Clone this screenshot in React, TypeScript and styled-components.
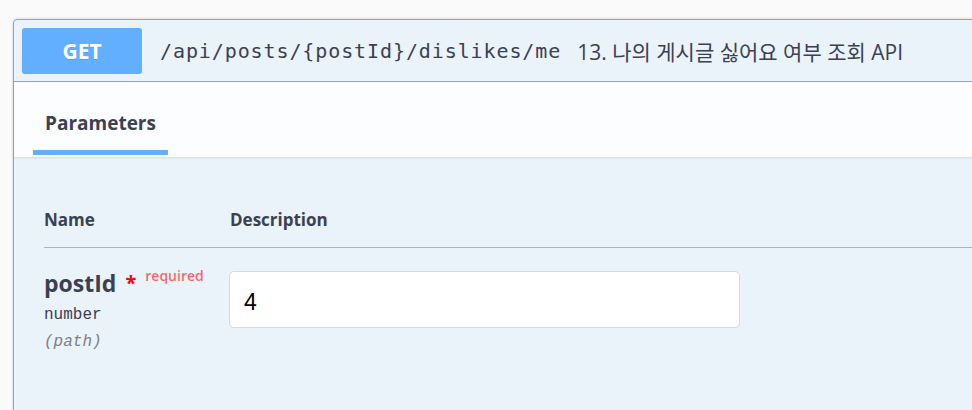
import styled, { createGlobalStyle } from 'styled-components'

const GlobalStyle = createGlobalStyle`
  html, body {
    margin: 0;
    padding: 0;
    background: #fafafa;
    overflow: hidden;
  }
`

const sans = `"Open Sans", "Noto Sans CJK KR", sans-serif`
const mono = `"Liberation Mono", "DejaVu Sans Mono", monospace`

const param = {
  name: "postId",
  type: "number",
  location: "path",
  value: "4",
}

const App = () => {
  return (
    <Page>
      <GlobalStyle />
      <Opblock>
        <Summary>
          <Method>GET</Method>
          <Path>/api/posts/&#123;postId&#125;/dislikes/me</Path>
          <Desc>13. 나의 게시글 싫어요 여부 조회 API</Desc>
        </Summary>
        <SectionHeader>
          <Tab>Parameters</Tab>
        </SectionHeader>
        <TableWrap>
          <HeadRow>
            <HeadCell>Name</HeadCell>
            <HeadCell>Description</HeadCell>
          </HeadRow>
          <ParamRow>
            <div>
              <ParamName>
                {param.name}
                <Star>*</Star>
                <Required>required</Required>
              </ParamName>
              <ParamType>{param.type}</ParamType>
              <ParamIn>({param.location})</ParamIn>
            </div>
            <div>
              <Input defaultValue={param.value} />
            </div>
          </ParamRow>
        </TableWrap>
      </Opblock>
    </Page>
  )
}

const Page = styled.div`
  width: 972px;
  height: 410px;
  overflow: hidden;
  box-sizing: border-box;
  padding: 19px 0 0 13px;
`
const Opblock = styled.div`
  width: 1000px;
  min-height: 420px;
  border: 1px solid #61affe;
  border-radius: 4px;
  background: rgba(97, 175, 254, 0.1);
  box-shadow: 0 0 3px rgba(0, 0, 0, 0.19);
`
const Summary = styled.div`
  display: flex;
  align-items: center;
  padding: 8px 8px 7px;
  border-bottom: 1px solid #61affe;
`
const Method = styled.div`
  width: 120px;
  height: 46px;
  display: flex;
  align-items: center;
  justify-content: center;
  background: #61affe;
  border-radius: 3px;
  color: #fff;
  font-family: ${sans};
  font-size: 21px;
  font-weight: 700;
  text-shadow: 0 1px 0 rgba(0, 0, 0, 0.1);
`
const Path = styled.span`
  margin-left: 18px;
  font-family: "DejaVu Sans Mono", "Liberation Mono", monospace;
  font-size: 20px;
  letter-spacing: 0.9px;
  color: #3b4151;
`
const Desc = styled.span`
  margin-left: 16px;
  font-family: ${sans};
  font-size: 21px;
  color: #3b4151;
`
const SectionHeader = styled.div`
  height: 75px;
  box-sizing: border-box;
  display: flex;
  align-items: flex-end;
  padding: 0 19px;
  background: rgba(255, 255, 255, 0.8);
  box-shadow: 0 1px 2px rgba(0, 0, 0, 0.1);
`
const Tab = styled.div`
  padding: 0 12px 15px;
  margin-bottom: 2px;
  border-bottom: 5px solid #61affe;
  font-family: ${sans};
  font-size: 19px;
  line-height: 24px;
  font-weight: 700;
  color: #3b4151;
`
const TableWrap = styled.div`
  padding: 1px 0 0 30px;
`
const HeadRow = styled.div`
  display: grid;
  grid-template-columns: 186px 1fr;
  padding: 50px 0 15px;
  border-bottom: 1px solid #a9b5c2;
`
const HeadCell = styled.div`
  font-family: ${sans};
  font-size: 17px;
  line-height: 24px;
  font-weight: 700;
  color: #3b4151;
`
const ParamRow = styled.div`
  display: grid;
  grid-template-columns: 185px 1fr;
  padding-top: 23px;
`
const ParamName = styled.div`
  display: flex;
  align-items: flex-start;
  font-family: ${sans};
  font-size: 23px;
  line-height: 24px;
  font-weight: 700;
  color: #3b4151;
`
const Star = styled.span`
  margin-left: 9px;
  color: red;
  font-size: 20px;
  line-height: 24px;
`
const Required = styled.span`
  margin-left: 9px;
  margin-top: -4px;
  font-size: 14px;
  line-height: 18px;
  font-weight: 600;
  color: rgba(255, 0, 0, 0.6);
`
const ParamType = styled.div`
  margin-top: 9px;
  font-family: ${mono};
  font-size: 16px;
  line-height: 22px;
  color: #3b4151;
`
const ParamIn = styled.div`
  margin-top: 5px;
  font-family: ${mono};
  font-size: 16px;
  line-height: 22px;
  font-style: italic;
  color: gray;
`
const Input = styled.input`
  width: 511px;
  height: 57px;
  box-sizing: border-box;
  padding: 6px 14px 0;
  border: 1px solid #d9d9d9;
  border-radius: 5px;
  background: #fff;
  font-family: "Liberation Sans", Arial, sans-serif;
  font-size: 23px;
  color: #000;
  outline: none;
`

export default App
